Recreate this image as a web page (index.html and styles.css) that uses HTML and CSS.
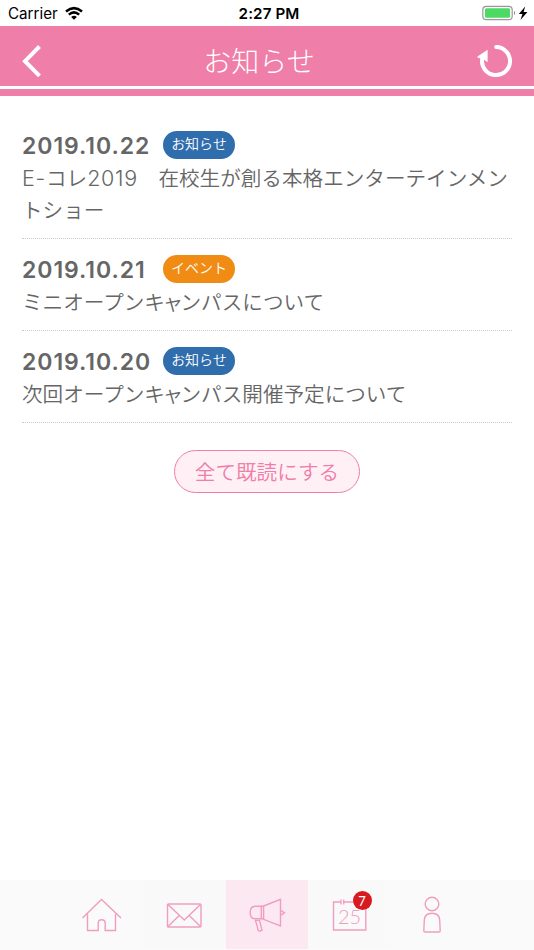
FILE: index.html
```html
<!DOCTYPE html>
<html lang="ja">

<head>
  <meta charset="UTF-8">
  <meta name="viewport" content="width=device-width">
  <title>お知らせ</title>
  <link rel="stylesheet" href="styles.css">
</head>

<body>
  <div class="status">
    <div class="carrier">
      <span>Carrier</span>
      <svg class="wifi" width="18" height="13" viewBox="0 0 18 13">
        <path d="M1 4.5Q9-2.2 17 4.5" />
        <path d="M3.8 7.6Q9 3.2 14.2 7.6" />
        <path class="dot" d="M6.1 9.9Q9 7.5 11.9 9.9L9 12.8Z" />
      </svg>
    </div>
    <div class="time">2:27 PM</div>
    <div class="battery">
      <svg width="46" height="16" viewBox="0 0 46 16">
        <rect x="0.8" y="0.3" width="29.4" height="13.4" rx="3.5" fill="#fff" stroke="#999" stroke-width="1.2" />
        <rect x="2.9" y="2.3" width="25.2" height="9.4" rx="1.5" fill="#4cd964" />
        <path d="M32 4.8Q34.2 7 32 9.2Z" fill="#888" />
        <path d="M43.2 0.5L36.8 8h3.6l-1.9 6L45.4 6h-3.8Z" fill="#000" />
      </svg>
    </div>
  </div>
  <header>
    <a class="back" href="#">
      <svg width="22" height="34" viewBox="0 0 22 34"><path d="M19.5 2.5L5 17.2L19.5 31.9" /></svg>
    </a>
    <h1>お知らせ</h1>
    <a class="reload" href="#">
      <svg width="36" height="34" viewBox="0 0 36 34">
        <path d="M18.2 3.1A14 14 0 1 1 4.2 15" />
        <path class="arrow" d="M9.6 5.7V18.3L6.5 16L-0.5 13.5V12.5Z" />
      </svg>
    </a>
  </header>
  <main>
    <ul class="news">
      <li>
        <div class="head"><time>2019.10.22</time><span class="label info">お知らせ</span></div>
        <p><span class="en">E-</span>コレ<span class="en">2019</span>　在校生が創る本格エンターテインメントショー</p>
      </li>
      <li>
        <div class="head"><time>2019.10.21</time><span class="label event">イベント</span></div>
        <p>ミニオープン<span class="tight">キャ</span>ンパスについて</p>
      </li>
      <li>
        <div class="head"><time>2019.10.20</time><span class="label info">お知らせ</span></div>
        <p>次回オープン<span class="tight">キャ</span>ンパス開催予定について</p>
      </li>
    </ul>
    <button type="button" class="read">全て既読にする</button>
  </main>
  <nav>
    <a href="#">
      <svg width="42" height="36" viewBox="0 0 42 36">
        <path d="M1.5 21L20.5 2.5L40 21" />
        <path d="M6.5 17V33.5H17.2V26Q17.2 22.7 20.7 22.7T24.2 26V33.5H34.5V17" />
      </svg>
    </a>
    <a href="#">
      <svg width="36" height="26" viewBox="0 0 36 26">
        <rect x="1.5" y="2" width="33.5" height="23" rx="1" />
        <path d="M2 2.5L18.3 18L34.5 2.5M2 24.5L13.2 13.6M34.5 24.5L23.3 13.6" />
      </svg>
    </a>
    <a href="#" class="on">
      <svg width="40" height="36" viewBox="0 0 40 36">
        <path d="M8 9.2H14.3V21.7H8Q3.2 21.7 3.2 15.5T8 9.2Z" />
        <path d="M16.6 9L33.5 2.3V28.9L16.6 22.3Z" />
        <path d="M34 13.5L37.5 15.8L34 18.2M14.5 9.2H16.6M14.5 21.7H16.6" />
        <path d="M8.5 23.4H12.5L15 33.2Q13.1 34.5 11.3 33.6Z" />
      </svg>
    </a>
    <a href="#">
      <span class="cal">
        <svg width="36" height="32" viewBox="0 0 36 32">
          <path d="M9 3H1.5V31H33.8V3H12.2M9 0.5V5.5M11.7 0.5V5.5" />
        </svg>
        <span class="day">25</span>
        <span class="count">7</span>
      </span>
    </a>
    <a href="#">
      <svg width="20" height="40" viewBox="0 0 20 40">
        <circle cx="10" cy="9" r="6.8" />
        <path d="M10 18.3C14.5 18.3 17.3 20 17.7 25L18.2 35.8Q18.2 37 17 37H3Q1.8 37 1.8 35.8L2.3 25C2.7 20 5.5 18.3 10 18.3Z" />
      </svg>
    </a>
  </nav>
</body>

</html>
```
FILE: styles.css
```css
* {
  box-sizing: border-box;
  margin: 0;
  padding: 0;
}

body {
  display: flex;
  flex-direction: column;
  height: 950px;
  background: #fff;
  color: #666;
  font-family: "Noto Sans CJK JP", sans-serif;
}

a {
  display: flex;
  text-decoration: none;
}

svg {
  display: block;
  overflow: visible;
}

/* ステータスバー */
.status {
  display: grid;
  grid-template-columns: 1fr auto 1fr;
  align-items: center;
  height: 26px;
  padding: 1px 6px 0 8px;
  color: #000;
  font: 15.2px/24px Inter, sans-serif;
}

.carrier {
  display: flex;
  align-items: center;
  gap: 7px;
}

.wifi path {
  fill: none;
  stroke: #000;
  stroke-width: 2.5;
}

.wifi .dot {
  fill: #000;
  stroke: none;
}

.time {
  padding-left: 2px;
  font-weight: 600;
  letter-spacing: 0.1px;
}

.battery {
  justify-self: end;
}

/* ヘッダー */
header {
  display: flex;
  align-items: center;
  justify-content: space-between;
  height: 70px;
  padding: 0 20px;
  background: linear-gradient(#ef7ea8 60.5px, #fff 60.5px, #fff 63.3px, #ef7ea8 63.3px);
}

header a {
  padding-bottom: 1px;
}

header h1 {
  padding: 0 2px 3px 0;
  color: #fff;
  font-size: 28px;
  font-weight: 300;
  line-height: 66px;
}

header path {
  fill: none;
  stroke: #fff;
  stroke-width: 4;
  stroke-linecap: round;
}

.back path {
  stroke-linecap: butt;
}

header .arrow {
  fill: #fff;
  stroke: none;
}

/* お知らせ一覧 */
main {
  flex: 1;
  padding: 19.4px 22px 0;
}

.news {
  list-style: none;
}

.news li {
  padding: 16px 0 13px;
  border-bottom: 1px dotted #ccc;
}

.news li:first-child {
  padding-bottom: 13.4px;
}

.head {
  display: flex;
  height: 29.7px;
}

time {
  width: 141px;
  font: 600 23px/30px Inter, sans-serif;
  letter-spacing: 0.95px;
}

.label {
  width: 72px;
  height: 28px;
  border-radius: 14px;
  color: #fff;
  font-size: 14px;
  font-weight: 350;
  line-height: 25px;
  text-align: center;
}

.info {
  background: #2f6dad;
}

.event {
  background: #f08c14;
}

.news p {
  font-size: 20.6px;
  font-weight: 350;
  line-height: 32px;
}

.en {
  font: 300 21.5px/1 Inter, sans-serif;
  letter-spacing: 0.7px;
}

.tight {
  letter-spacing: -2.5px;
}

.read {
  display: block;
  width: 186px;
  height: 43px;
  margin: 27px auto 0;
  border: 1.5px solid #ef7ea8;
  border-radius: 22px;
  background: #fff0f5;
  color: #ef7ea8;
  font: 350 20.6px/38px "Noto Sans CJK JP", sans-serif;
}

/* フッターメニュー */
nav {
  display: flex;
  justify-content: center;
  height: 70px;
  background: #fafafa;
}

nav a {
  align-items: center;
  justify-content: center;
  width: 82.6px;
  height: 69px;
}

nav a:nth-child(even) {
  background: #f9f9f9;
}

nav a.on {
  background: #fce8f1;
}

nav path,
nav rect,
nav circle {
  fill: none;
  stroke: #f19dc0;
  stroke-width: 1.4;
}

.cal {
  position: relative;
}

.day {
  position: absolute;
  top: 5px;
  left: 0;
  width: 36px;
  color: #f19dc0;
  font: 300 20px/24px Lato, sans-serif;
  text-align: center;
}

.count {
  position: absolute;
  top: -8px;
  right: -4px;
  width: 19px;
  height: 19px;
  border-radius: 50%;
  background: #d71920;
  color: #fff;
  font: 13px/20px Lato, sans-serif;
  text-align: center;
}
```
